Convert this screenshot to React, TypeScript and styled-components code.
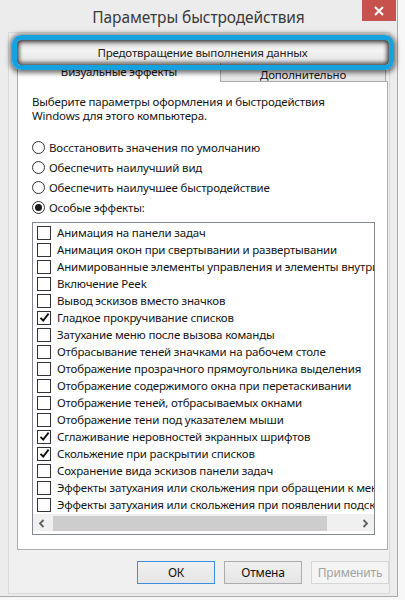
import styled, { createGlobalStyle } from 'styled-components';

const GlobalStyle = createGlobalStyle`
  html, body {
    margin: 0;
    padding: 0;
    background: #f7f7f7;
  }
  * {
    box-sizing: border-box;
  }
`;

const effects = [
  { label: 'Анимация на панели задач', on: false },
  { label: 'Анимация окон при свертывании и развертывании', on: false },
  { label: 'Анимированные элементы управления и элементы внутри окна', on: false },
  { label: 'Включение Peek', on: false },
  { label: 'Вывод эскизов вместо значков', on: false },
  { label: 'Гладкое прокручивание списков', on: true },
  { label: 'Затухание меню после вызова команды', on: false },
  { label: 'Отбрасывание теней значками на рабочем столе', on: false },
  { label: 'Отображение прозрачного прямоугольника выделения', on: false },
  { label: 'Отображение содержимого окна при перетаскивании', on: false },
  { label: 'Отображение теней, отбрасываемых окнами', on: false },
  { label: 'Отображение тени под указателем мыши', on: false },
  { label: 'Сглаживание неровностей экранных шрифтов', on: true },
  { label: 'Скольжение при раскрытии списков', on: true },
  { label: 'Сохранение вида эскизов панели задач', on: false },
  { label: 'Эффекты затухания или скольжения при обращении к меню', on: false },
  { label: 'Эффекты затухания или скольжения при появлении подсказок', on: false },
];

const modes = [
  { label: 'Восстановить значения по умолчанию', on: false },
  { label: 'Обеспечить наилучший вид', on: false },
  { label: 'Обеспечить наилучшее быстродействие', on: false },
  { label: 'Особые эффекты:', on: true },
];

const App = () => {
  return (
    <>
      <GlobalStyle />
      <Window>
        <TitleBar>
          <Title>Параметры быстродействия</Title>
          <CloseButton>
            <svg width="10" height="10" viewBox="0 0 10 10">
              <path d="M1 1 L9 9 M9 1 L1 9" stroke="#fff" strokeWidth="2" />
            </svg>
          </CloseButton>
        </TitleBar>
        <Client>
          <TabTop>
            <DepTab>Предотвращение выполнения данных</DepTab>
            <Highlight />
          </TabTop>
          <TabRow>
            <Tab $active>Визуальные эффекты</Tab>
            <Tab>Дополнительно</Tab>
          </TabRow>
          <Panel>
            <Intro>
              Выберите параметры оформления и быстродействия
              <br />
              Windows для этого компьютера.
            </Intro>
            <RadioGroup>
              {modes.map((m) => (
                <RadioRow key={m.label}>
                  <RadioCircle $on={m.on} />
                  <span>{m.label}</span>
                </RadioRow>
              ))}
            </RadioGroup>
            <ListBox>
              <Items>
                {effects.map((e) => (
                  <Item key={e.label}>
                    <CheckBox>
                      {e.on && (
                        <svg width="11" height="11" viewBox="0 0 11 11">
                          <path
                            d="M1.5 5.8 L4.2 8.6 L9.6 1.6"
                            fill="none"
                            stroke="#111"
                            strokeWidth="1.9"
                          />
                        </svg>
                      )}
                    </CheckBox>
                    <ItemText>{e.label}</ItemText>
                  </Item>
                ))}
              </Items>
              <HScroll>
                <Arrow>
                  <svg width="7" height="9" viewBox="0 0 7 9">
                    <path d="M5.5 1 L2 4.5 L5.5 8" fill="none" stroke="#606060" strokeWidth="1.8" />
                  </svg>
                </Arrow>
                <Track>
                  <Thumb style={{ width: '91%' }} />
                </Track>
                <Arrow>
                  <svg width="7" height="9" viewBox="0 0 7 9">
                    <path d="M1.5 1 L5 4.5 L1.5 8" fill="none" stroke="#606060" strokeWidth="1.8" />
                  </svg>
                </Arrow>
              </HScroll>
            </ListBox>
          </Panel>
          <Buttons>
            <Button $default>ОК</Button>
            <Button>Отмена</Button>
            <Button disabled>Применить</Button>
          </Buttons>
        </Client>
      </Window>
    </>
  );
};

const Window = styled.div`
  width: 398px;
  height: 597px;
  background: #ececec;
  border-right: 1px solid #a9a9a9;
  border-bottom: 1px solid #a9a9a9;
  display: flex;
  flex-direction: column;
  font-family: 'Noto Sans', 'Open Sans', sans-serif;
  font-size: 11.5px;
  letter-spacing: -0.18px;
  color: #151515;
`;

const TitleBar = styled.div`
  position: relative;
  height: 32px;
  display: flex;
  align-items: center;
  justify-content: center;
`;

const Title = styled.div`
  font-size: 15.5px;
  letter-spacing: -0.1px;
  color: #3a3a3a;
  padding-top: 2px;
`;

const CloseButton = styled.div`
  position: absolute;
  top: 0;
  right: 1px;
  width: 34px;
  height: 21px;
  background: #c7514d;
  display: flex;
  align-items: center;
  justify-content: center;
`;

const Client = styled.div`
  flex: 1;
  margin: 0 7px 2px 8px;
  border: 1px solid #dadada;
  background: #f0f0f0;
  padding: 7px 1px 0 8px;
  display: flex;
  flex-direction: column;
`;

const TabTop = styled.div`
  position: relative;
  height: 23px;
  z-index: 2;
`;

const DepTab = styled.div`
  height: 100%;
  display: flex;
  align-items: center;
  justify-content: center;
  background: linear-gradient(#d8d8d8, #f4f4f4 45%, #e4e4e4);
  color: #222;
  padding-top: 2px;
`;

const Highlight = styled.div`
  position: absolute;
  top: -5px;
  left: -5px;
  right: -6px;
  bottom: -7px;
  border: 5px solid #16a2e0;
  border-radius: 9px;
  box-shadow: 0 1px 5px 2px rgba(0, 0, 0, 0.55),
    inset 0 0 4px 2px rgba(0, 0, 0, 0.75);
`;

const TabRow = styled.div`
  display: flex;
  align-items: flex-end;
  height: 19px;
  position: relative;
  z-index: 1;
  margin-bottom: -1px;
`;

const Tab = styled.div<{ $active?: boolean }>`
  height: ${(p) => (p.$active ? '20px' : '16px')};
  width: ${(p) => (p.$active ? '204px' : '165px')};
  display: flex;
  align-items: ${(p) => (p.$active ? 'flex-start' : 'center')};
  justify-content: center;
  border: 1px solid #acacac;
  border-bottom: ${(p) => (p.$active ? 'none' : '1px solid #acacac')};
  border-left: ${(p) => (p.$active ? '1px solid #acacac' : 'none')};
  background: ${(p) => (p.$active ? '#fff' : 'linear-gradient(#f0f0f0, #e5e5e5)')};
  padding-top: ${(p) => (p.$active ? '2px' : '1px')};
  line-height: 14px;
`;

const Panel = styled.div`
  width: 371px;
  height: 469px;
  background: #fff;
  border: 1px solid #acacac;
  padding: 13px 12px 13px 14px;
  display: flex;
  flex-direction: column;
`;

const Intro = styled.div`
  line-height: 14px;
`;

const RadioGroup = styled.div`
  margin-top: 14px;
  display: flex;
  flex-direction: column;
`;

const RadioRow = styled.div`
  height: 20px;
  display: flex;
  align-items: center;
  gap: 4px;
`;

const RadioCircle = styled.div<{ $on: boolean }>`
  width: 13px;
  height: 13px;
  border-radius: 50%;
  border: 1px solid #333;
  background: #fff;
  display: flex;
  align-items: center;
  justify-content: center;
  &::after {
    content: '';
    display: ${(p) => (p.$on ? 'block' : 'none')};
    width: 7px;
    height: 7px;
    border-radius: 50%;
    background: #1a1a1a;
  }
`;

const ListBox = styled.div`
  margin-top: 5px;
  height: 313px;
  border: 1px solid #828790;
  padding: 1px 0 3px;
  display: flex;
  flex-direction: column;
  overflow: hidden;
`;

const Items = styled.div`
  flex: 1;
  overflow: hidden;
`;

const Item = styled.div`
  height: 17px;
  display: flex;
  align-items: center;
  padding-left: 4px;
  gap: 6px;
  white-space: nowrap;
`;

const CheckBox = styled.div`
  flex: none;
  width: 14px;
  height: 14px;
  border: 1px solid #333;
  background: #fff;
  display: flex;
  align-items: center;
  justify-content: center;
`;

const ItemText = styled.span`
  white-space: nowrap;
`;

const HScroll = styled.div`
  height: 17px;
  display: flex;
  align-items: stretch;
  background: #f0f0f0;
  padding-top: 2px;
`;

const Arrow = styled.div`
  width: 17px;
  display: flex;
  align-items: center;
  justify-content: center;
`;

const Track = styled.div`
  flex: 1;
  padding: 0 3px;
  display: flex;
`;

const Thumb = styled.div`
  background: #cdcdcd;
`;

const Buttons = styled.div`
  margin-top: 11px;
  display: flex;
  justify-content: flex-end;
  gap: 9px;
  margin-right: -1px;
`;

const Button = styled.button<{ $default?: boolean }>`
  width: 78px;
  height: 23px;
  font-family: inherit;
  font-size: 12px;
  letter-spacing: -0.2px;
  color: #111;
  border: 1px solid ${(p) => (p.$default ? '#3c8fe0' : '#acacac')};
  background: linear-gradient(#f0f0f0, #e5e5e5);
  padding: 0;
  &:disabled {
    color: #a3a3a3;
    border-color: #d6d6d6;
    background: #f4f4f4;
  }
`;

export default App;
